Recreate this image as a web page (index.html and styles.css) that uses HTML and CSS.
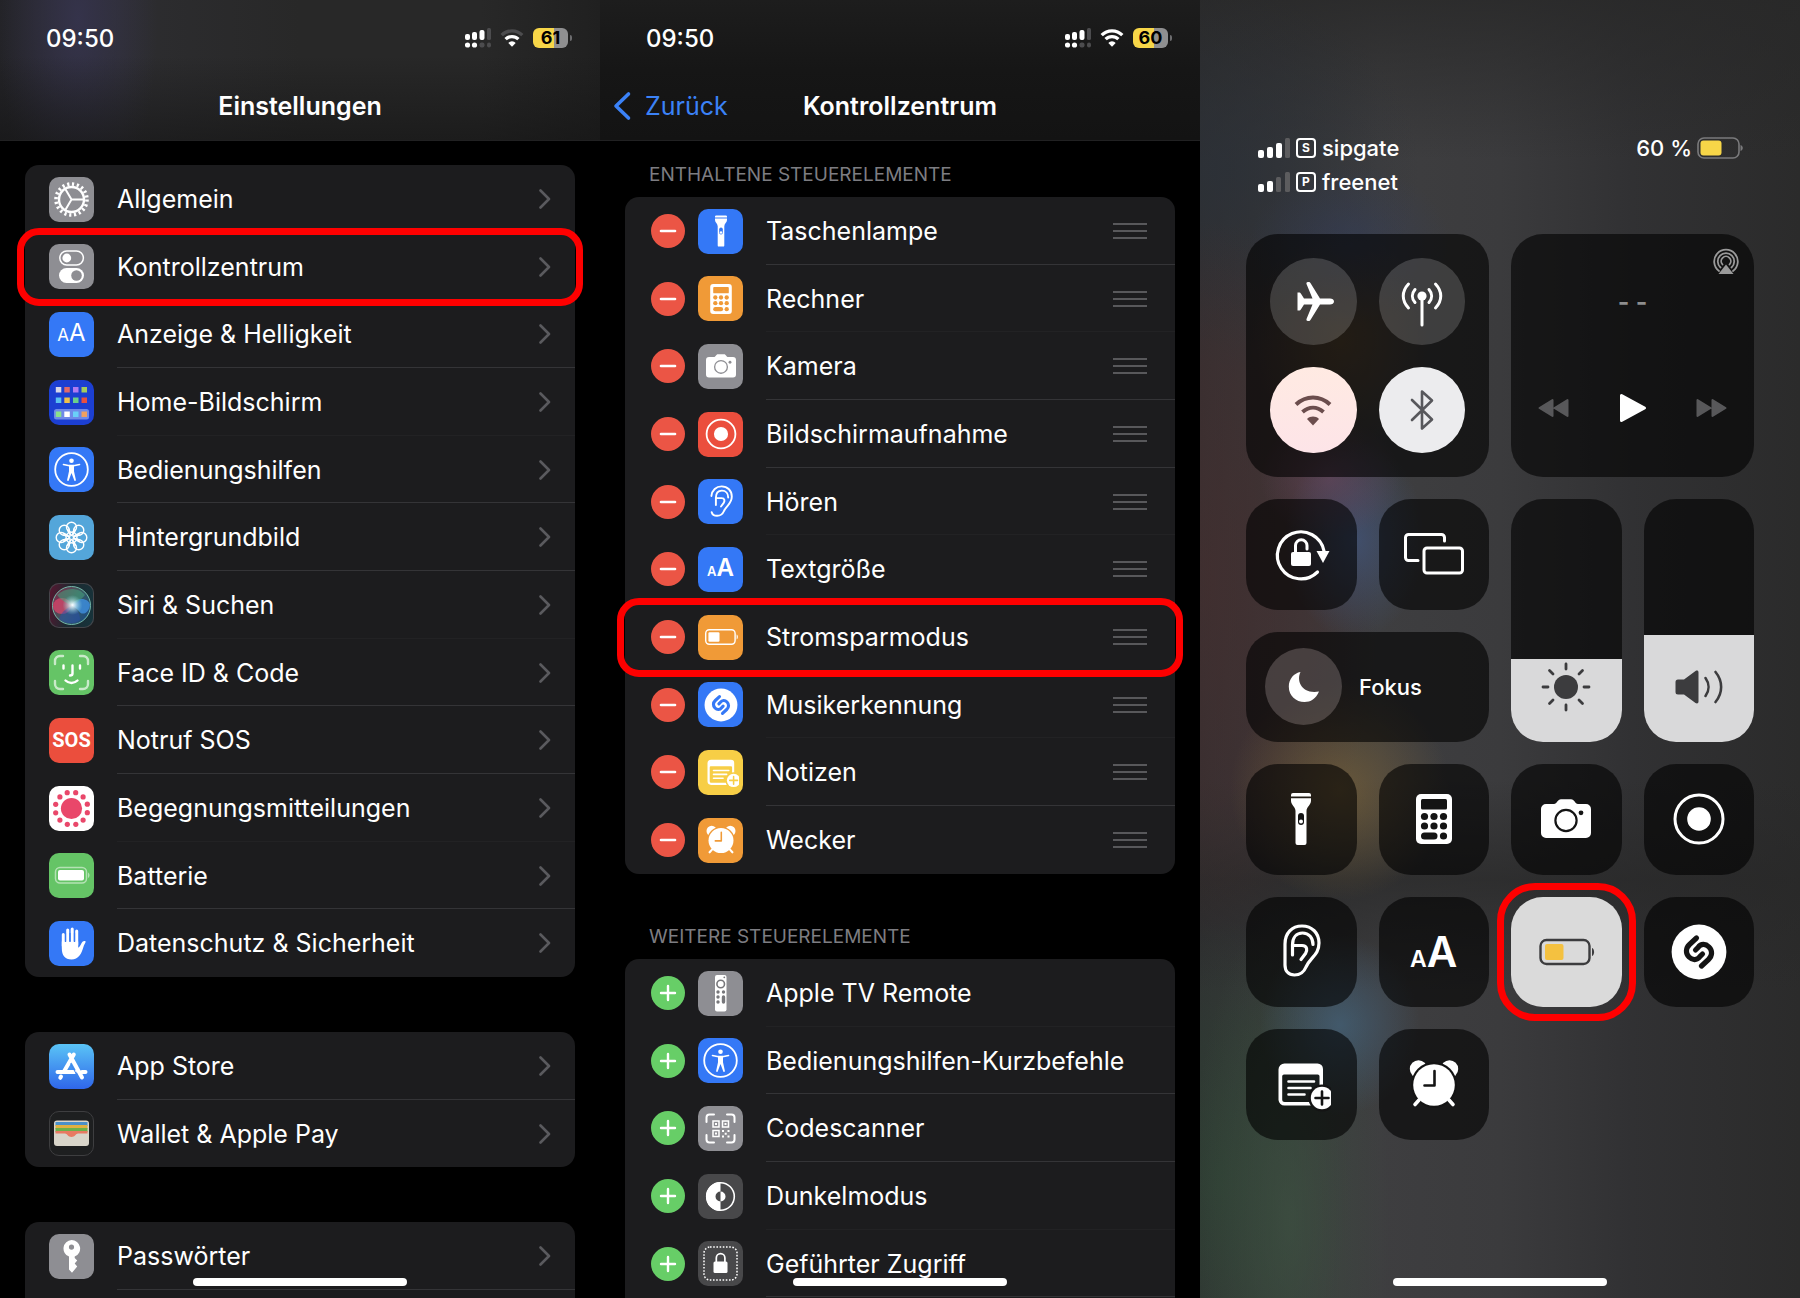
FILE: index.html
```html
<!DOCTYPE html>
<html lang="de">
<head>
  <meta charset="UTF-8" />
  <meta name="viewport" content="width=device-width, initial-scale=1.0" />
  <title>Stromsparmodus im Kontrollzentrum</title>
  <link rel="stylesheet" href="styles.css">
</head>
<body>
  <!-- shared glyphs -->
  <svg class="sprite" aria-hidden="true">
    <symbol id="chevron" viewBox="0 0 12 20"><path d="M1.500 1.500 10 10l-8.500 8.500" fill="none" stroke="currentColor" stroke-width="2.600" stroke-linecap="round" stroke-linejoin="round"/></symbol>
    <symbol id="grip" viewBox="0 0 34 18"><path d="M0 2h34M0 9h34M0 16h34" stroke="currentColor" stroke-width="2"/></symbol>
    <symbol id="minus" viewBox="0 0 34 34"><path d="M10 17h14" stroke="#fff" stroke-width="2.600" stroke-linecap="round"/></symbol>
    <symbol id="plus" viewBox="0 0 34 34"><path d="M10 17h14M17 10v14" stroke="#fff" stroke-width="2.400" stroke-linecap="round"/></symbol>
    <symbol id="dual-signal" viewBox="0 0 26 20">
      <g fill="#fff"><rect y="6" width="5" height="6" rx="2"/><rect x="7" y="4" width="5" height="8" rx="2"/><rect x="14.500" y="2" width="5" height="10" rx="2"/><circle cx="2.500" cy="17" r="2.600"/><circle cx="9.500" cy="17" r="2.600"/></g>
      <g fill="#4c4c4e"><rect x="22" width="4" height="12" rx="1.500"/><rect x="14.500" y="14.500" width="5" height="5" rx="2"/><rect x="22" y="14.500" width="4" height="5" rx="2"/></g>
    </symbol>
    <symbol id="wifi" viewBox="0 0 24 18">
      <path class="wifi-outer" d="M1.700 6.200a14.500 14.500 0 0 1 20.600 0" fill="none" stroke="currentColor" stroke-width="3.300"/>
      <path d="M5.600 10.200a9 9 0 0 1 12.800 0" fill="none" stroke="currentColor" stroke-width="3.300"/>
      <path d="M8.300 13.900a5.200 5.200 0 0 1 7.400 0L12 17.800z" fill="currentColor"/>
    </symbol>
    <symbol id="wlan" viewBox="0 0 38 32">
      <path d="M2 10.500c10-9.300 24-9.300 34 0M8.500 18c6.500-5.700 14.500-5.700 21 0" fill="none" stroke="currentColor" stroke-width="4"/>
      <path d="M13 25c3.500-3.200 8.500-3.200 12 0l-6 6.500z" fill="currentColor"/>
    </symbol>
    <symbol id="torch" viewBox="0 0 60 60">
      <path fill="currentColor" d="M20 6a2 2 0 0 1 2-2h16a2 2 0 0 1 2 2v1.500H20zM20 9.200h20v2.500c0 4-4.500 6.300-4.500 10.300V54a2 2 0 0 1-2 2h-7a2 2 0 0 1-2-2V22c0-4-4.500-6.300-4.500-10.300z"/>
      <rect x="27" y="24" width="6" height="12" rx="3" fill="var(--hole)"/><circle cx="30" cy="32.500" r="2" fill="currentColor"/>
    </symbol>
    <symbol id="calc" viewBox="0 0 60 60">
      <rect x="12" y="5" width="36" height="50" rx="5" fill="currentColor"/>
      <g fill="var(--hole)"><rect x="17" y="10" width="26" height="10.500" rx="1.500"/><circle cx="20.500" cy="27.500" r="3.600"/><circle cx="30" cy="27.500" r="3.600"/><circle cx="39.500" cy="27.500" r="3.600"/><circle cx="20.500" cy="37" r="3.600"/><circle cx="30" cy="37" r="3.600"/><circle cx="39.500" cy="37" r="3.600"/><rect x="17" y="43.400" width="16.500" height="7" rx="3.500"/><circle cx="39.500" cy="47" r="3.600"/></g>
    </symbol>
    <symbol id="camera" viewBox="0 0 60 60">
      <path fill="currentColor" d="M10 15h8c3 0 3.500-4.700 7-4.700h10c3.500 0 4 4.700 7 4.700h8a5 5 0 0 1 5 5v24a5 5 0 0 1-5 5H10a5 5 0 0 1-5-5V20a5 5 0 0 1 5-5z"/>
      <circle cx="30" cy="31.500" r="10.600" fill="none" stroke="var(--hole)" stroke-width="2.200"/><circle cx="45" cy="23.800" r="2.400" fill="var(--hole)"/>
    </symbol>
    <symbol id="record" viewBox="0 0 60 60"><circle cx="30" cy="30" r="24" fill="none" stroke="currentColor" stroke-width="3"/><circle cx="30" cy="30" r="11.800" fill="currentColor"/></symbol>
    <symbol id="ear" viewBox="0 0 60 60">
      <g fill="none" stroke="currentColor" stroke-width="3.200" stroke-linecap="round" stroke-linejoin="round"><path d="M14 22C14 11 21 4 31 4s17 7 17 17c0 12-8.500 14-13 24-2.500 6-6 8-11.500 8-6 0-9.500-4-9.500-10z"/><path d="M21.500 33V23c0-7.500 4-12 10-12 6.500 0 10.500 5 10.500 11.500M21.500 23.500H31c5.500 0 5.500 5 3.500 8L30 37.500"/></g>
    </symbol>
    <symbol id="ear-open" viewBox="0 0 60 60">
      <g fill="none" stroke="currentColor" stroke-width="3.200" stroke-linecap="round" stroke-linejoin="round"><path d="M14 20C15 10 22 4 31 4c10 0 17 7 17 17 0 12-8.500 14-13 24-2.500 6-6 8-11.500 8-5 0-8-2-9-6"/><path d="M21.500 35V23c0-7.500 4-12 10-12 6.500 0 10.500 5 10.500 11.500M21.500 23.500H31c5.500 0 5.500 5 3.500 8L30 37.500"/></g>
    </symbol>
    <symbol id="low-power" viewBox="0 0 60 60">
      <rect x="4.500" y="18" width="49" height="24" rx="6" fill="none" stroke="currentColor" stroke-width="2.400"/><rect x="9" y="22" width="18.500" height="16" rx="2" fill="var(--charge, currentColor)"/><path d="M56 26c2.800 1 2.800 7 0 8z" fill="currentColor"/>
    </symbol>
    <symbol id="shazam" viewBox="0 0 60 60">
      <circle cx="30" cy="30" r="27.400" fill="currentColor"/>
      <g fill="none" stroke="var(--hole)" stroke-width="5.200" stroke-linecap="round"><path d="M27.500 16 20.500 22.500c-4 3.800-4 9-.5 12.500s8 3.500 11-.5l2.500-2.500"/><path d="M32.500 44l7-6.500c4-3.800 4-9 .5-12.500s-8-3.500-11 .5L26.500 28"/></g>
    </symbol>
    <symbol id="notes" viewBox="0 0 60 60">
      <path fill="currentColor" fill-rule="evenodd" d="M13.500 9.500h33a5.500 5.500 0 0 1 5.500 5.500v34a2.500 2.500 0 0 1-2.500 2.500h-36A6 6 0 0 1 7.500 46V15.500a6 6 0 0 1 6-6zM13 20.500a1.800 1.800 0 0 0-1.800 1.800V45.500A2.500 2.500 0 0 0 13.700 48h34.800V22.300a1.800 1.800 0 0 0-1.800-1.800z"/>
      <path d="M17.500 27.500h25.500M17.500 34h22M17.500 40.500h16" stroke="currentColor" stroke-width="2.600" stroke-linecap="round"/>
      <circle cx="51" cy="44" r="13.600" fill="var(--hole)"/><circle cx="51" cy="44" r="11.200" fill="currentColor"/><path d="M51 37.500v13M44.500 44h13" stroke="var(--hole)" stroke-width="2.600" stroke-linecap="round"/>
    </symbol>
    <symbol id="alarm" viewBox="0 0 60 60">
      <circle cx="14.500" cy="15" r="8.700" fill="currentColor"/><circle cx="45.500" cy="15" r="8.700" fill="currentColor"/>
      <circle cx="30" cy="31" r="23" fill="var(--hole)"/><path d="m15 46-4 4.500M45 46l4 4.500" stroke="currentColor" stroke-width="3.600" stroke-linecap="round"/>
      <circle cx="30" cy="31" r="20.800" fill="currentColor"/><path d="M30.500 17v14.500H20.500" fill="none" stroke="var(--hole)" stroke-width="2.600" stroke-linecap="round" stroke-linejoin="round"/>
    </symbol>
    <symbol id="person" viewBox="0 0 45 45">
      <circle cx="22.500" cy="22.500" r="16.300" fill="none" stroke="#fff" stroke-width="1.800"/><circle cx="22.500" cy="13.700" r="2.300" fill="#fff"/>
      <path d="m14.500 17.500 6 1.300h4l6-1.300" fill="none" stroke="#fff" stroke-width="1.600" stroke-linecap="round" stroke-linejoin="round"/><path d="M20 17.800h5v6.500l2 9.200-1.500.5-3-8-3 8-1.500-.5 2-9.200z" fill="#fff"/>
    </symbol>
  </svg>

  <main class="screens">

    <!-- settings -->
    <section class="screen">
      <header class="topbar topbar-tinted">
        <div class="status">
          <time>09:50</time>
          <div class="status-icons">
            <svg class="signal"><use href="#dual-signal"/></svg>
            <svg class="wifi wifi-weak"><use href="#wifi"/></svg>
            <span class="charge">61</span>
          </div>
        </div>
        <div class="nav"><h1>Einstellungen</h1></div>
      </header>

      <div class="content content-main">
        <ul class="card faint-a">
          <li><a class="row" href="#"><span class="app gray"><svg viewBox="0 0 45 45"><g fill="none" stroke="#fff"><circle cx="22.500" cy="22.500" r="12.500" stroke-width="2.400"/><circle cx="22.500" cy="22.500" r="15.500" stroke-width="3.600" stroke-dasharray="2.200 2.670"/><path d="M22.500 22.500H35M22.500 22.500l-6.500-11M22.500 22.500l-6.500 11" stroke-width="2"/></g></svg></span><span class="label">Allgemein</span><svg class="chevron"><use href="#chevron"/></svg></a></li>
          <li class="marked"><a class="row" href="#"><span class="app gray"><svg viewBox="0 0 45 45"><rect x="10.800" y="7" width="23.600" height="14" rx="7" fill="none" stroke="#fff" stroke-width="1.500"/><circle cx="17.800" cy="14" r="4.400" fill="#fff"/><rect x="10" y="24" width="25" height="15" rx="7.500" fill="#fff"/><circle cx="27.500" cy="31.500" r="5.300" fill="#8e8e93"/></svg></span><span class="label">Kontrollzentrum</span><svg class="chevron"><use href="#chevron"/></svg></a></li>
          <li><a class="row" href="#"><span class="app blue letters letters-thin"><span><small>A</small>A</span></span><span class="label">Anzeige &amp; Helligkeit</span><svg class="chevron"><use href="#chevron"/></svg></a></li>
          <li><a class="row" href="#"><span class="app home"><svg viewBox="0 0 45 45"><rect x="5" y="29" width="35" height="10.500" rx="2.500" fill="#6f8ae8"/><g><path fill="#d8d8e8" d="M6.800 7h5.500v5.500H6.800z"/><path fill="#e06a6a" d="M15.300 7h5.500v5.500h-5.500z"/><path fill="#b07af0" d="M24 7h5.500v5.500H24z"/><path fill="#a5cc5c" d="M32.500 7H38v5.500h-5.500z"/><path fill="#5ac0f0" d="M6.800 17.500h5.500V23H6.800z"/><path fill="#f0c04a" d="M15.300 17.500h5.500V23h-5.500z"/><path fill="#6ad08a" d="M24 17.500h5.500V23H24z"/><path fill="#e85040" d="M32.500 17.500H38V23h-5.500z"/><path fill="#8ae08a" d="M6.800 31.500h5.500V37H6.800z"/><path fill="#fff" d="M15.300 31.500h5.500V37h-5.500z"/><path fill="#6ad0f8" d="M24 31.500h5.500V37H24z"/><path fill="#f0a060" d="M32.500 31.500H38V37h-5.500z"/></g></svg></span><span class="label">Home-Bildschirm</span><svg class="chevron"><use href="#chevron"/></svg></a></li>
          <li><a class="row" href="#"><span class="app blue"><svg><use href="#person"/></svg></span><span class="label">Bedienungshilfen</span><svg class="chevron"><use href="#chevron"/></svg></a></li>
          <li><a class="row" href="#"><span class="app sky"><svg viewBox="0 0 45 45"><g transform="translate(22.500 22.500)" fill="none" stroke="#fff" stroke-width="1.400"><g id="petals"><circle cy="-10.300" r="5"/><circle cy="10.300" r="5"/><circle cx="-10.300" r="5"/><circle cx="10.300" r="5"/><path d="M-4.300-8C-3-5-1.500-3 0-2c1.500-1 3-3 4.300-6M-4.300 8C-3 5-1.500 3 0 2c1.500 1 3 3 4.300 6M-8-4.300C-5-3-3-1.500-2 0c-1 1.500-3 3-6 4.300M8-4.300C5-3 3-1.500 2 0c1 1.500 3 3 6 4.300"/></g><use href="#petals" transform="rotate(45)"/></g></svg></span><span class="label">Hintergrundbild</span><svg class="chevron"><use href="#chevron"/></svg></a></li>
          <li><a class="row" href="#"><span class="app siri"><svg viewBox="0 0 45 45"><defs><radialGradient id="siri-glow"><stop offset="0" stop-color="#fff"/><stop offset=".3" stop-color="#d8f0f4" stop-opacity=".75"/><stop offset="1" stop-color="#7fd0d8" stop-opacity="0"/></radialGradient><linearGradient id="siri-ball" x1="0" y1=".2" x2="1" y2=".8"><stop offset="0" stop-color="#7a2a4a"/><stop offset=".5" stop-color="#3c5c60"/><stop offset="1" stop-color="#1a4a80"/></linearGradient></defs><circle cx="22.500" cy="22.500" r="19" fill="url(#siri-ball)" stroke="#74b8a8" stroke-width="1"/><ellipse cx="13" cy="23" rx="9" ry="8" fill="#f0456f" opacity=".65"/><path d="M22 22c6-9 18-7 19 0-1 8-8 12-12 5z" fill="#3f90e0" opacity=".8"/><path d="M10 36c2-8 10-12 13-13 6 3 8 8 8 14-6 5-15 4-21-1z" fill="#2a50b0" opacity=".5"/><path d="M8 12c8-8 22-8 28 0-4 5-10 9-14 10-5-2-10-5-14-10z" fill="#46a880" opacity=".5"/><circle cx="23.500" cy="22" r="10" fill="url(#siri-glow)"/></svg></span><span class="label">Siri &amp; Suchen</span><svg class="chevron"><use href="#chevron"/></svg></a></li>
          <li><a class="row" href="#"><span class="app green"><svg viewBox="0 0 45 45"><g fill="none" stroke="#fff" stroke-width="2.400" stroke-linecap="round"><path opacity=".65" d="M6 14v-3a5 5 0 0 1 5-5h3M31 6h3a5 5 0 0 1 5 5v3M39 31v3a5 5 0 0 1-5 5h-3M14 39h-3a5 5 0 0 1-5-5v-3"/><path d="M14.500 15.500v3M31 15.500v3M23.500 15.500v8c0 1.500-1 2-2.500 2M16.500 30.500c3.500 3.300 8.500 3.300 12 0"/></g></svg></span><span class="label">Face ID &amp; Code</span><svg class="chevron"><use href="#chevron"/></svg></a></li>
          <li><a class="row" href="#"><span class="app red sos">SOS</span><span class="label">Notruf SOS</span><svg class="chevron"><use href="#chevron"/></svg></a></li>
          <li><a class="row" href="#"><span class="app white"><svg viewBox="0 0 45 45"><g fill="#e9476a"><circle cx="22.500" cy="22.500" r="10.600"/><g id="ring"><circle cx="26.700" cy="6.700" r="2.600"/><circle cx="34.100" cy="10.900" r="2.600"/><circle cx="38.300" cy="18.200" r="2.600"/></g><use href="#ring" transform="rotate(90 22.500 22.500)"/><use href="#ring" transform="rotate(180 22.500 22.500)"/><use href="#ring" transform="rotate(270 22.500 22.500)"/></g></svg></span><span class="label">Begegnungsmitteilungen</span><svg class="chevron"><use href="#chevron"/></svg></a></li>
          <li><a class="row" href="#"><span class="app green"><svg viewBox="0 0 45 45"><rect x="6.500" y="14.500" width="31" height="15.500" rx="4.500" fill="none" stroke="#b4e2b4" stroke-width="1.500"/><rect x="9" y="17" width="26" height="10.500" rx="2" fill="#fff"/><path d="M39 19.500c2 1 2 4.500 0 5.500z" fill="#b4e2b4"/></svg></span><span class="label">Batterie</span><svg class="chevron"><use href="#chevron"/></svg></a></li>
          <li><a class="row" href="#"><span class="app blue"><svg viewBox="0 0 45 45"><path d="M14.300 13.500V25M18.700 9v14M23.200 8v14M27.700 10v14" stroke="#fff" stroke-width="3" stroke-linecap="round"/><path fill="#fff" d="M12.800 20.500h16.400v6.300c2.300-1.500 3-4.500 4.300-6 1-1.100 3.300-1 3.200 0-.3 1.500-1.700 2.700-2.200 5C32.500 33 29.500 38.500 22.500 38.500c-6.500 0-9.700-4-9.700-11.500z"/><path d="M16.500 12v9M21 12v9M25.500 12v9" stroke="#3478f6" stroke-width="1.200"/></svg></span><span class="label">Datenschutz &amp; Sicherheit</span><svg class="chevron"><use href="#chevron"/></svg></a></li>
        </ul>

        <ul class="card">
          <li><a class="row" href="#"><span class="app store"><svg viewBox="0 0 45 45"><g stroke="#fff" stroke-width="4" stroke-linecap="round"><path d="M24.800 10.500 15 27.500M8.500 28h17M33 28h3.500M20.500 10.500 33 33.500M12 32.500l-.7 1.300"/></g><path d="m22.500 17.500 8 14.500" stroke="#3f86ee" stroke-width="1" transform="translate(-1 2)"/></svg></span><span class="label">App Store</span><svg class="chevron"><use href="#chevron"/></svg></a></li>
          <li><a class="row" href="#"><span class="app wallet"><svg viewBox="0 0 45 45"><rect x="5" y="9.500" width="35" height="25.500" rx="3" fill="#d9d5ca"/><path fill="#4a90c8" d="M6.500 11h32v4h-32z"/><path fill="#e0b040" d="M6.500 14h32v4h-32z"/><path fill="#6cb04a" d="M6.500 17h32v4h-32z"/><path fill="#e87a62" d="M6.500 20h32v2.500H29c-2 0-3 3.500-6.500 3.500S18 22.500 16 22.500H6.500z"/></svg></span><span class="label">Wallet &amp; Apple Pay</span><svg class="chevron"><use href="#chevron"/></svg></a></li>
        </ul>

        <ul class="card">
          <li><a class="row" href="#"><span class="app gray"><svg viewBox="0 0 45 45"><path fill="#fff" fill-rule="evenodd" d="M22.500 6a8.600 8.600 0 0 1 3.200 16.600V24l2.500 2.500-2.500 3 2.500 3-5.200 6.300-3-3.300V22.600A8.600 8.600 0 0 1 22.500 6zm0 4.500a2.600 2.600 0 1 0 0 5.200 2.600 2.600 0 0 0 0-5.200z"/></svg></span><span class="label">Passwörter</span><svg class="chevron"><use href="#chevron"/></svg></a></li>
          <li class="row"></li>
        </ul>
      </div>
      <div class="home-bar"></div>
    </section>

    <!-- control centre settings -->
    <section class="screen">
      <header class="topbar">
        <div class="status">
          <time>09:50</time>
          <div class="status-icons">
            <svg class="signal"><use href="#dual-signal"/></svg>
            <svg class="wifi"><use href="#wifi"/></svg>
            <span class="charge">60</span>
          </div>
        </div>
        <div class="nav">
          <a class="back" href="#"><svg viewBox="0 0 18 28"><path d="M15.500 2 3 14l12.500 12" fill="none" stroke="currentColor" stroke-width="3.600" stroke-linecap="round" stroke-linejoin="round"/></svg>Zurück</a>
          <h1>Kontrollzentrum</h1>
        </div>
      </header>

      <div class="content content-controls">
        <h2>ENTHALTENE STEUERELEMENTE</h2>
        <ul class="card controls faint-b">
          <li class="row"><button class="dot remove" aria-label="Entfernen"><svg><use href="#minus"/></svg></button><span class="app blue"><svg class="glyph"><use href="#torch"/></svg></span><span class="label">Taschenlampe</span><svg class="grip"><use href="#grip"/></svg></li>
          <li class="row"><button class="dot remove" aria-label="Entfernen"><svg><use href="#minus"/></svg></button><span class="app orange"><svg class="glyph"><use href="#calc"/></svg></span><span class="label">Rechner</span><svg class="grip"><use href="#grip"/></svg></li>
          <li class="row"><button class="dot remove" aria-label="Entfernen"><svg><use href="#minus"/></svg></button><span class="app gray"><svg class="glyph"><use href="#camera"/></svg></span><span class="label">Kamera</span><svg class="grip"><use href="#grip"/></svg></li>
          <li class="row"><button class="dot remove" aria-label="Entfernen"><svg><use href="#minus"/></svg></button><span class="app red"><svg class="glyph"><use href="#record"/></svg></span><span class="label">Bildschirmaufnahme</span><svg class="grip"><use href="#grip"/></svg></li>
          <li class="row"><button class="dot remove" aria-label="Entfernen"><svg><use href="#minus"/></svg></button><span class="app blue"><svg class="glyph"><use href="#ear-open"/></svg></span><span class="label">Hören</span><svg class="grip"><use href="#grip"/></svg></li>
          <li class="row"><button class="dot remove" aria-label="Entfernen"><svg><use href="#minus"/></svg></button><span class="app blue letters"><span><small>A</small>A</span></span><span class="label">Textgröße</span><svg class="grip"><use href="#grip"/></svg></li>
          <li class="row marked"><button class="dot remove" aria-label="Entfernen"><svg><use href="#minus"/></svg></button><span class="app orange"><svg class="glyph"><use href="#low-power"/></svg></span><span class="label">Stromsparmodus</span><svg class="grip"><use href="#grip"/></svg></li>
          <li class="row"><button class="dot remove" aria-label="Entfernen"><svg><use href="#minus"/></svg></button><span class="app blue"><svg class="glyph"><use href="#shazam"/></svg></span><span class="label">Musikerkennung</span><svg class="grip"><use href="#grip"/></svg></li>
          <li class="row"><button class="dot remove" aria-label="Entfernen"><svg><use href="#minus"/></svg></button><span class="app yellow"><svg class="glyph"><use href="#notes"/></svg></span><span class="label">Notizen</span><svg class="grip"><use href="#grip"/></svg></li>
          <li class="row"><button class="dot remove" aria-label="Entfernen"><svg><use href="#minus"/></svg></button><span class="app orange"><svg class="glyph"><use href="#alarm"/></svg></span><span class="label">Wecker</span><svg class="grip"><use href="#grip"/></svg></li>
        </ul>

        <h2>WEITERE STEUERELEMENTE</h2>
        <ul class="card controls faint-a">
          <li class="row"><button class="dot add" aria-label="Hinzufügen"><svg><use href="#plus"/></svg></button><span class="app gray"><svg viewBox="0 0 45 45"><rect x="17" y="4" width="11.500" height="36.500" rx="2" fill="#fff"/><circle cx="22.700" cy="13" r="3.800" fill="none" stroke="#77777b" stroke-width="1.600"/><g fill="#77777b"><circle cx="26.300" cy="6.300" r=".9"/><circle cx="20" cy="21" r="1.700"/><circle cx="25.500" cy="21" r="1.700"/><circle cx="20" cy="26" r="1.700"/><circle cx="20" cy="31" r="1.700"/><rect x="23.800" y="24.300" width="3.400" height="8.400" rx="1.700"/></g></svg></span><span class="label">Apple TV Remote</span></li>
          <li class="row"><button class="dot add" aria-label="Hinzufügen"><svg><use href="#plus"/></svg></button><span class="app blue"><svg><use href="#person"/></svg></span><span class="label">Bedienungshilfen-Kurzbefehle</span></li>
          <li class="row"><button class="dot add" aria-label="Hinzufügen"><svg><use href="#plus"/></svg></button><span class="app gray"><svg viewBox="0 0 45 45"><g fill="none" stroke="#fff"><path stroke-width="2" stroke-linecap="round" d="M8.500 16v-4.500a3 3 0 0 1 3-3H16M29 8.500h4.500a3 3 0 0 1 3 3V16M36.500 29v4.500a3 3 0 0 1-3 3H29M16 36.500h-4.500a3 3 0 0 1-3-3V29"/><path stroke-width="1.500" d="M15 15h6v6h-6zM24.500 15h6v6h-6zM15 24.500h6v6h-6z"/></g><path fill="#fff" d="M17 17h2v2h-2zM26.500 17h2v2h-2zM17 26.500h2v2h-2zM24 24h2v2h-2zM29.500 24h2v2h-2zM26.700 26.700h2v2h-2zM24 29.400h2v2h-2zM29.500 29.400h2v2h-2z"/></svg></span><span class="label">Codescanner</span></li>
          <li class="row"><button class="dot add" aria-label="Hinzufügen"><svg><use href="#plus"/></svg></button><span class="app dark"><svg viewBox="0 0 45 45"><circle cx="22.500" cy="22.500" r="13.800" fill="none" stroke="#fff" stroke-width="1.600"/><path fill="#fff" d="M22.500 8v9.500a5 5 0 0 0 0 10V37a14.500 14.500 0 0 1 0-29z"/><path fill="#fff" d="M22.500 17.500a5 5 0 0 1 0 10z"/></svg></span><span class="label">Dunkelmodus</span></li>
          <li class="row"><button class="dot add" aria-label="Hinzufügen"><svg><use href="#plus"/></svg></button><span class="app dark"><svg viewBox="0 0 45 45"><rect x="6" y="6" width="33" height="33" rx="6" fill="none" stroke="#fff" stroke-width="1.500" stroke-dasharray="1.600 1.600"/><rect x="15.500" y="20.500" width="14" height="11.500" rx="1.500" fill="#fff"/><path d="M18.300 21v-4a4.300 4.300 0 0 1 8.600 0v4" fill="none" stroke="#fff" stroke-width="1.700"/></svg></span><span class="label">Geführter Zugriff</span></li>
          <li class="row"></li>
        </ul>
      </div>
      <div class="home-bar"></div>
    </section>

    <!-- control centre -->
    <section class="screen centre">
      <header class="carriers">
        <div>
          <p><svg viewBox="0 0 32 20"><g fill="#fff"><rect y="12" width="6" height="8" rx="2"/><rect x="9" y="9" width="6" height="11" rx="2"/><rect x="18" y="5" width="6" height="15" rx="2"/></g><rect x="27" width="5" height="20" rx="1.500" fill="#5c5c5e"/></svg><span class="sim">S</span>sipgate</p>
          <p><svg viewBox="0 0 32 20"><g fill="#fff"><rect y="12" width="6" height="8" rx="2"/><rect x="9" y="9" width="6" height="11" rx="2"/></g><g fill="#5c5c5e"><rect x="18" y="5" width="5" height="15" rx="1.500"/><rect x="27" width="5" height="20" rx="1.500"/></g></svg><span class="sim">P</span>freenet</p>
        </div>
        <p class="level">60 %<svg viewBox="0 0 46 22"><rect x="1" y="1" width="41" height="20" rx="6" fill="none" stroke="#7a7a7c" stroke-width="1.600"/><rect x="3.500" y="3.500" width="21" height="15" rx="3" fill="#f7d648"/><path d="M43.500 8c3 1 3 5 0 6z" fill="#7a7a7c"/></svg></p>
      </header>

      <div class="tiles">
        <div class="tile big connect">
          <button class="round" aria-label="Flugmodus"><svg viewBox="0 0 42 42"><path fill="#fff" d="M5.500 12.500h1.500c1 0 1.500.5 2 1.300l3 4.700h8.500L14.500 4c-.3-1.300.3-2 1.300-2h.8c1 0 1.500.5 2 1.300L28 18.500h10c2.200 0 4 1.300 4 3s-1.800 3-4 3H28L18.600 39.700c-.5.8-1 1.300-2 1.300h-.8c-1 0-1.600-.7-1.300-2l6-14.500H12l-3 4.700c-.5.8-1 1.300-2 1.300H5.500z"/></svg></button>
          <button class="round" aria-label="Mobile Daten"><svg viewBox="0 0 42 42"><circle cx="21" cy="16" r="4.600" fill="#fff"/><g fill="none" stroke="#fff" stroke-width="3" stroke-linecap="round"><path d="M21 18v27M14 9.500c-3.500 4-3.500 9 0 13M28 9.500c3.500 4 3.500 9 0 13M7.500 4c-7 7.500-7 16.500 0 24M34.500 4c7 7.500 7 16.500 0 24"/></g></svg></button>
          <button class="round on warm" aria-label="WLAN"><svg class="wlan"><use href="#wlan"/></svg></button>
          <button class="round on" aria-label="Bluetooth"><svg viewBox="0 0 42 42"><path d="m11 11 20 19.500L21 39.500v-37l10 9L11 31" fill="none" stroke="#58585c" stroke-width="2.600" stroke-linecap="round" stroke-linejoin="round"/></svg></button>
        </div>

        <div class="tile big media">
          <svg class="airplay" viewBox="0 0 26 26"><g fill="none" stroke="#9a9a9a" stroke-width="1.800" stroke-linecap="round"><path d="M6 22a11.800 11.800 0 1 1 14 0M7.500 18.500a8.200 8.200 0 1 1 11 0M9.500 15.500a4.800 4.800 0 1 1 7 0"/></g><path d="M13 15.500 20.500 25h-15z" fill="#9a9a9a"/></svg>
          <p class="track">- -</p>
          <div class="transport">
            <button aria-label="Zurück"><svg viewBox="0 0 31 20"><path fill="#58585a" stroke="#58585a" stroke-width="2" stroke-linejoin="round" d="M14.500 2v16L1.500 10zM29.500 2v16l-13-8z"/></svg></button>
            <button class="play" aria-label="Abspielen"><svg viewBox="0 0 28 30"><path fill="#fff" stroke="#fff" stroke-width="3" stroke-linejoin="round" d="M2.500 2.500v25L25.500 15z"/></svg></button>
            <button aria-label="Weiter"><svg viewBox="0 0 31 20"><path fill="#58585a" stroke="#58585a" stroke-width="2" stroke-linejoin="round" d="M16.500 2v16l13-8zM1.500 2v16l13-8z"/></svg></button>
          </div>
        </div>

        <button class="tile" aria-label="Ausrichtungssperre"><svg viewBox="0 0 60 60"><path d="M46.500 48A23.500 23.500 0 1 1 53 27" fill="none" stroke="#fff" stroke-width="3.200" stroke-linecap="round"/><path fill="#fff" d="M45.500 27h13l-6.500 12z"/><rect x="20" y="28" width="20" height="14" rx="2" fill="#fff"/><path d="M24.500 29v-7.500a5.500 5.500 0 0 1 11.500 0v3.500" fill="none" stroke="#fff" stroke-width="3" stroke-linecap="round"/></svg></button>
        <button class="tile" aria-label="Bildschirmsynchronisierung"><svg viewBox="0 0 60 60"><g fill="none" stroke="#fff" stroke-width="3" stroke-linejoin="round" stroke-linecap="round"><path d="M14 36.500H4.500a3 3 0 0 1-3-3v-20a3 3 0 0 1 3-3h33a3 3 0 0 1 3 3V17"/><rect x="20" y="24" width="38.500" height="25" rx="3"/></g></svg></button>

        <label class="tile slider"><input type="range" aria-label="Helligkeit" value="34" style="--value: 34%"><svg viewBox="0 0 60 60"><circle cx="30" cy="30" r="12" fill="#3c3c3e"/><path d="M30 7v5M30 48v5M7 30h5M48 30h5M13.500 13.500l3.500 3.500M43 43l3.500 3.500M13.500 46.500l3.500-3.500M43 17l3.500-3.500" stroke="#3c3c3e" stroke-width="2.800" stroke-linecap="round"/></svg></label>
        <label class="tile slider"><input type="range" aria-label="Lautstärke" value="44" style="--value: 44%"><svg viewBox="0 0 60 60"><path fill="#3c3c3e" d="M6.500 25a2.500 2.500 0 0 1 2.500-2.500h6L26.500 14c1.500-1 3-.5 3 1.500v29c0 2-1.500 2.500-3 1.500L15 37.500H9A2.500 2.500 0 0 1 6.500 35z"/><path d="M36.500 21c4 5.500 4 12.500 0 18M46.500 15c7.500 9 7.500 21 0 30" fill="none" stroke="#3c3c3e" stroke-width="2.600" stroke-linecap="round"/></svg></label>

        <button class="tile focus"><span class="moon"><svg viewBox="0 0 32 32"><path fill="#fff" d="M12.500 1C8 10 14 23.500 31 20.500 28 28 22.500 31 16.500 31 8 31 .8 25 .8 15.500.8 8 6 2 12.500 1z"/></svg></span>Fokus</button>

        <button class="tile" aria-label="Taschenlampe"><svg><use href="#torch"/></svg></button>
        <button class="tile" aria-label="Rechner"><svg><use href="#calc"/></svg></button>
        <button class="tile" aria-label="Kamera"><svg><use href="#camera"/></svg></button>
        <button class="tile" aria-label="Bildschirmaufnahme"><svg><use href="#record"/></svg></button>
        <button class="tile" aria-label="Hören"><svg><use href="#ear"/></svg></button>
        <button class="tile letters-big" aria-label="Textgröße"><span><small>A</small>A</span></button>
        <button class="tile active" aria-label="Stromsparmodus"><svg><use href="#low-power"/></svg></button>
        <button class="tile" aria-label="Musikerkennung"><svg><use href="#shazam"/></svg></button>
        <button class="tile" aria-label="Notizen"><svg><use href="#notes"/></svg></button>
        <button class="tile" aria-label="Wecker"><svg><use href="#alarm"/></svg></button>
      </div>
      <div class="home-bar"></div>
    </section>
  </main>
</body>
</html>
```
FILE: styles.css
```css
* {
  box-sizing: border-box;
}
body {
  margin: 0;
  background: #000;
  color: #fff;
  font-family: Inter, "Liberation Sans", sans-serif;
  font-size: 25px;
}
h1, h2, p, ul {
  margin: 0;
  padding: 0;
}
a {
  color: inherit;
  text-decoration: none;
}
button {
  border: 0;
  padding: 0;
  background: none;
  color: inherit;
  font: inherit;
}
svg {
  display: block;
  flex: none;
  overflow: visible;
}
.sprite {
  position: absolute;
  width: 0;
  height: 0;
}
.screens {
  display: grid;
  grid-template-columns: repeat(3, minmax(0, 1fr));
  height: 100vh;
  overflow: hidden;
}
.screen {
  position: relative;
  overflow: hidden;
}
.home-bar {
  position: absolute;
  bottom: 12px;
  left: 50%;
  width: 214px;
  height: 8px;
  margin-left: -107px;
  border-radius: 4px;
  background: #fff;
}

/* top bar */
.topbar {
  padding-bottom: 4px;
  border-bottom: 1px solid #212122;
  background: linear-gradient(#1d1d1d, #161616 50%, #131313);
}
.topbar-tinted {
  background:
    linear-gradient(transparent 40%, rgba(20, 20, 20, .6)),
    radial-gradient(ellipse 80px 200px at 78px 20px, rgba(54, 52, 78, .9), transparent),
    linear-gradient(90deg, #232327, #2d2d30 20%, #282828 50%, #282828 80%, #202020);
}
.status {
  display: flex;
  justify-content: space-between;
  align-items: center;
  height: 76px;
  padding: 0 28px 0 46px;
}
.status time {
  font-size: 24px;
  font-weight: 500;
}
.status-icons {
  display: flex;
  align-items: center;
  gap: 9px;
}
.signal {
  width: 26px;
  height: 20px;
}
.wifi {
  width: 24px;
  height: 18px;
}
.wifi-weak {
  --outer: #4c4c4e;
}
.wifi-outer {
  stroke: var(--outer, currentColor);
}
.charge {
  position: relative;
  width: 35px;
  margin-right: 4px;
  border-radius: 6px;
  background: linear-gradient(90deg, #f7d648 60%, #8f8f90 60%);
  color: #000;
  font-size: 18px;
  font-weight: 700;
  line-height: 20px;
  text-align: center;
}
.charge::after {
  content: "";
  position: absolute;
  top: 7px;
  right: -4px;
  width: 2px;
  height: 6px;
  border-radius: 0 2px 2px 0;
  background: #6c6c6e;
}
.nav {
  display: grid;
  grid-template-columns: 1fr auto 1fr;
  align-items: center;
  height: 60px;
  padding: 0 13px;
}
.nav h1 {
  grid-column: 2;
  font-size: 25px;
  font-weight: 600;
}
.back {
  display: flex;
  align-items: center;
  gap: 14px;
  color: #3b82f7;
}
.back svg {
  width: 18px;
  height: 28px;
}

/* lists */
.content {
  padding: 24px 25px 0;
}
.content-main {
  display: grid;
  gap: 55px;
}
.content-controls {
  padding-top: 22px;
}
.content h2 {
  margin: 0 24px 10px;
  color: #7d7d82;
  font-size: 19px;
  font-weight: 400;
  line-height: 24px;
}
.content .card + h2 {
  margin-top: 51px;
}
.card {
  --indent: 92px;
  --line: #343437;
  border-radius: 14px;
  background: #1c1c1e;
  list-style: none;
}
.controls {
  --indent: 141px;
}
.card > li {
  position: relative;
  height: 68px;
}
.card > li:nth-child(3n + 2) {
  height: 67px;
}
.card > li + li::before {
  content: "";
  position: absolute;
  top: -1px;
  left: var(--indent);
  right: 0;
  border-top: 1px solid var(--line);
}
/* every third hairline is softer */
.faint-a > li:nth-child(3n + 2),
.faint-b > li:nth-child(3n) {
  --line: #222224;
}
.row {
  display: flex;
  align-items: center;
  height: 100%;
  padding: 0 24px;
}
.controls .row {
  padding: 0 28px 0 26px;
}
.marked::after {
  content: "";
  position: absolute;
  z-index: 1;
  inset: -5px -8px -6px;
  border: 7px solid #fe0000;
  border-radius: 22px;
}
.label {
  flex: 1;
  margin-left: 23px;
  white-space: nowrap;
}
.chevron {
  width: 12px;
  height: 20px;
  color: #5a5a5e;
}
.grip {
  width: 34px;
  height: 18px;
  color: #58585b;
}
.dot {
  width: 34px;
  height: 34px;
  margin-right: 13px;
  border-radius: 50%;
}
.dot svg {
  width: 34px;
  height: 34px;
}
.remove {
  background: #eb5545;
}
.add {
  background: #67ce67;
}
.app {
  display: flex;
  flex: none;
  align-items: center;
  justify-content: center;
  width: 45px;
  height: 45px;
  border-radius: 10px;
  background: var(--hole);
}
.app svg {
  width: 45px;
  height: 45px;
}
.app .glyph {
  width: 36px;
  height: 36px;
}
.gray { --hole: #8e8e93; }
.blue { --hole: #3478f6; }
.orange { --hole: #f09a37; }
.red { --hole: #eb4e3d; }
.green { --hole: #65c466; }
.yellow { --hole: #f7ce46; }
.sky { --hole: #54a6da; }
.white { --hole: #fff; }
.dark { --hole: #48484a; }
.home { --hole: #1c3fd2; }
.wallet {
  border: 1px solid #3e3e40;
  background: #1e1f20;
}
.store {
  background: linear-gradient(#5ac4f6, #2f66ea);
}
.siri {
  background: linear-gradient(100deg, #5a1530, #1c2a30 45%, #16343c);
  box-shadow: inset 0 0 0 1px #45454a;
}
.letters {
  font-size: 24px;
  font-weight: 600;
  line-height: 45px;
}
.letters small {
  font-size: 13px;
}
.letters-thin {
  font-weight: 400;
}
.letters-thin small {
  font-size: 17px;
}
.sos {
  font-family: Roboto, sans-serif;
  font-size: 20px;
  font-weight: 700;
}

/* control centre */
.centre {
  padding: 131px 46px 0;
  background:
    radial-gradient(ellipse 70px 60px at 130px 478px, rgba(110, 72, 98, .55), transparent),
    radial-gradient(ellipse 100px 80px at 150px 245px, rgba(50, 62, 96, .5), transparent),
    radial-gradient(ellipse 70px 100px at 155px 540px, rgba(66, 86, 124, .75), transparent),
    radial-gradient(ellipse 90px 110px at 140px 340px, rgba(120, 84, 40, .45), transparent),
    radial-gradient(ellipse 110px 110px at 140px 790px, rgba(128, 102, 56, .65), transparent),
    radial-gradient(ellipse 80px 90px at 140px 1025px, rgba(68, 98, 122, .75), transparent),
    radial-gradient(ellipse 100px 320px at 90px 1220px, rgba(66, 88, 70, .55), transparent),
    radial-gradient(ellipse 130px 260px at 20px 1180px, rgba(46, 66, 52, .8), rgba(46, 66, 52, .4) 60%, transparent),
    radial-gradient(ellipse 170px 360px at 10px 580px, rgba(74, 46, 46, .6), rgba(74, 46, 46, .4) 60%, transparent),
    radial-gradient(ellipse 200px 180px at 20px 170px, rgba(42, 48, 56, .7), transparent),
    linear-gradient(rgba(40, 40, 40, .8), transparent 160px, transparent 780px, rgba(40, 40, 40, .7) 880px, transparent 990px),
    linear-gradient(90deg, #303032, #3e3e40 30%, #3b3b3d 50%, #313133 72%, #2b2b2b);
}
.carriers {
  display: flex;
  justify-content: space-between;
  margin-bottom: 35px;
  padding: 0 11px 0 12px;
  font-size: 22px;
  font-weight: 500;
  line-height: 34px;
}
.carriers p {
  display: flex;
  align-items: center;
}
.carriers svg {
  width: 32px;
  height: 20px;
}
.carriers .level {
  height: 34px;
  gap: 5px;
}
.carriers .level svg {
  width: 46px;
  height: 22px;
}
.sim {
  width: 20px;
  margin: 0 6px;
  border: 2px solid #fff;
  border-radius: 4px;
  font-size: 12px;
  font-weight: 700;
  line-height: 16px;
  text-align: center;
}
.tiles {
  display: grid;
  grid-template-columns: repeat(4, minmax(0, 1fr));
  gap: 22px;
}
.tile {
  --hole: #141414;
  position: relative;
  display: flex;
  align-items: center;
  justify-content: center;
  aspect-ratio: 1;
  border-radius: 32px;
  background: rgba(0, 0, 0, .6);
}
.tile > svg {
  width: 60px;
  height: 60px;
}
.big {
  grid-column: span 2;
  grid-row: span 2;
}
.connect {
  display: grid;
  grid-template-columns: 1fr 1fr;
  gap: 22px;
  padding: 24px;
}
.round {
  display: flex;
  align-items: center;
  justify-content: center;
  aspect-ratio: 1;
  border-radius: 50%;
  background: rgba(255, 255, 255, .17);
}
.round svg {
  width: 42px;
  height: 42px;
}
.round .wlan {
  width: 38px;
  height: 32px;
  color: #6b4d4d;
}
.on {
  background: #ececee;
}
.warm {
  background: linear-gradient(#ffeae2, #fde4e8);
}
.media {
  flex-direction: column;
  align-items: stretch;
  justify-content: flex-start;
  padding: 15px 15px 0 27px;
}
.media .airplay {
  align-self: flex-end;
  width: 26px;
  height: 26px;
}
.track {
  margin-top: 12px;
  padding-right: 12px;
  color: #8e8e8e;
  font-size: 25px;
  font-weight: 600;
  line-height: 30px;
  text-align: center;
}
.transport {
  display: flex;
  align-items: center;
  justify-content: space-between;
  margin-top: 76px;
  padding-right: 12px;
}
.transport svg {
  width: 31px;
  height: 20px;
}
.transport .play svg {
  width: 28px;
  height: 30px;
}
.slider {
  grid-row: span 2;
  aspect-ratio: 5 / 11;
  align-items: flex-end;
  overflow: hidden;
}
.slider input {
  position: absolute;
  inset: 0;
  width: 100%;
  height: 100%;
  margin: 0;
  appearance: none;
  writing-mode: vertical-lr;
  direction: rtl;
  background: linear-gradient(0deg, #d9d9da var(--value), transparent var(--value));
}
.slider input::-webkit-slider-thumb {
  appearance: none;
  width: 1px;
  height: 1px;
}
.slider svg {
  position: relative;
  margin-bottom: 25px;
}
.focus {
  grid-column: span 2;
  aspect-ratio: 11 / 5;
  justify-content: flex-start;
  gap: 17px;
  padding-left: 19px;
  font-size: 22px;
  font-weight: 500;
}
.moon {
  display: flex;
  align-items: center;
  justify-content: center;
  width: 77px;
  height: 77px;
  border-radius: 50%;
  background: rgba(255, 235, 235, .2);
}
.moon svg {
  width: 32px;
  height: 32px;
}
.letters-big {
  font-size: 42px;
  font-weight: 600;
  line-height: 60px;
}
.letters-big small {
  font-size: 23px;
  line-height: 1;
}
.active {
  --charge: #f4c140;
  background: #dadada;
  color: #3c3c3e;
}
.active::after {
  content: "";
  position: absolute;
  inset: -14px;
  border: 7px solid #fe0000;
  border-radius: 38px;
}
```
